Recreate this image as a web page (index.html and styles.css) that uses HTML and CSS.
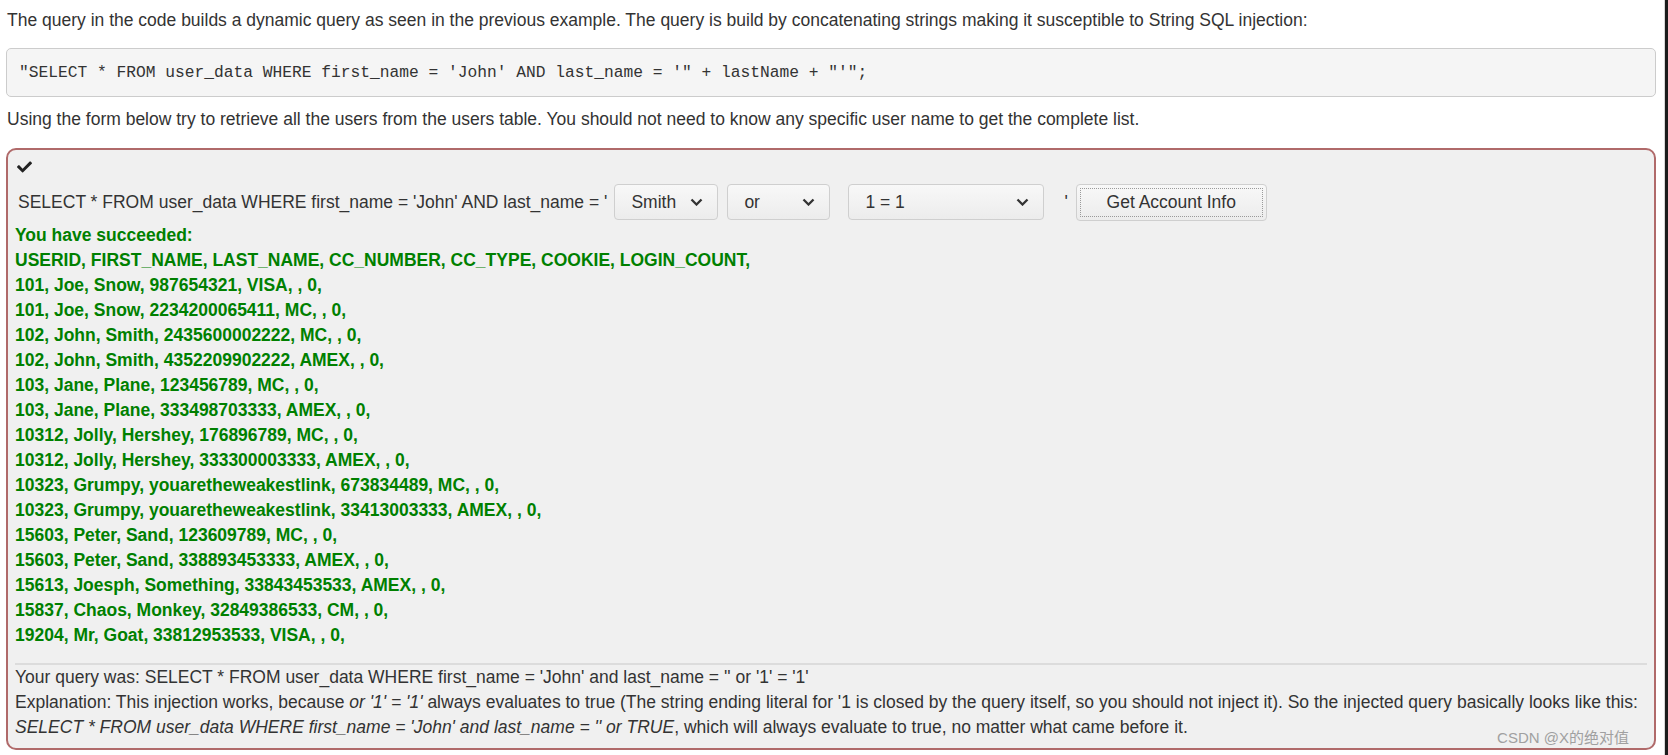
FILE: index.html
```html
<!DOCTYPE html>
<html lang="en">
<head>
<meta charset="utf-8">
<title>SQL Injection</title>
<link rel="stylesheet" href="styles.css">
</head>
<body>
<div class="page">
  <main class="content">
    <p class="lead">The query in the code builds a dynamic query as seen in the previous example. The query is build by concatenating strings making it susceptible to String SQL injection:</p>
    <pre class="code">"SELECT * FROM user_data WHERE first_name = 'John' AND last_name = '" + lastName + "'";</pre>
    <p class="lead">Using the form below try to retrieve all the users from the users table. You should not need to know any specific user name to get the complete list.</p>

    <section class="attack">
      <div class="check">
        <svg width="15" height="13" viewBox="0 0 512 420" aria-hidden="true"><path fill="#222" d="M173.9 409.4l-166.4-166.4c-10-10-10-26.2 0-36.2l36.2-36.2c10-10 26.2-10 36.2 0L192 282.7 432.1 42.6c10-10 26.2-10 36.2 0l36.2 36.2c10 10 10 26.2 0 36.2l-294.4 294.4c-10 10-26.2 10-36.2 0z"/></svg>
      </div>
      <form class="query-row">
        <span class="q-text">SELECT * FROM user_data WHERE first_name = 'John' AND last_name = '</span>
        <div class="select sel-name"><span>Smith</span><svg width="13" height="8" viewBox="0 0 13 8"><path d="M1.5 1.5l5 5 5-5" fill="none" stroke="#333" stroke-width="2.3"/></svg></div>
        <div class="select sel-op"><span>or</span><svg width="13" height="8" viewBox="0 0 13 8"><path d="M1.5 1.5l5 5 5-5" fill="none" stroke="#333" stroke-width="2.3"/></svg></div>
        <div class="select sel-cond"><span>1 = 1</span><svg width="13" height="8" viewBox="0 0 13 8"><path d="M1.5 1.5l5 5 5-5" fill="none" stroke="#333" stroke-width="2.3"/></svg></div>
        <span class="q-quote">'</span>
        <button type="button" class="btn"><span class="btn-inner">Get Account Info</span></button>
      </form>
      <div class="success">
        You have succeeded:<br>
        USERID, FIRST_NAME, LAST_NAME, CC_NUMBER, CC_TYPE, COOKIE, LOGIN_COUNT, <br>
        101, Joe, Snow, 987654321, VISA, , 0, <br>
        101, Joe, Snow, 2234200065411, MC, , 0, <br>
        102, John, Smith, 2435600002222, MC, , 0, <br>
        102, John, Smith, 4352209902222, AMEX, , 0, <br>
        103, Jane, Plane, 123456789, MC, , 0, <br>
        103, Jane, Plane, 333498703333, AMEX, , 0, <br>
        10312, Jolly, Hershey, 176896789, MC, , 0, <br>
        10312, Jolly, Hershey, 333300003333, AMEX, , 0, <br>
        10323, Grumpy, youaretheweakestlink, 673834489, MC, , 0, <br>
        10323, Grumpy, youaretheweakestlink, 33413003333, AMEX, , 0, <br>
        15603, Peter, Sand, 123609789, MC, , 0, <br>
        15603, Peter, Sand, 338893453333, AMEX, , 0, <br>
        15613, Joesph, Something, 33843453533, AMEX, , 0, <br>
        15837, Chaos, Monkey, 32849386533, CM, , 0, <br>
        19204, Mr, Goat, 33812953533, VISA, , 0, 
      </div>
      <hr class="sep">
      <div class="output">
        <p>Your query was: SELECT * FROM user_data WHERE first_name = 'John' and last_name = '' or '1' = '1'</p>
        <p>Explanation: This injection works, because <i>or '1' = '1'</i> always evaluates to true (The string ending literal for '1 is closed by the query itself, so you should not inject it). So the injected query basically looks like this: <i>SELECT * FROM user_data WHERE first_name = 'John' and last_name = '' or TRUE</i>, which will always evaluate to true, no matter what came before it.</p>
      </div>
      <div class="watermark">CSDN @X的绝对值</div>
    </section>
  </main>
  <div class="edge"></div>
</div>
</body>
</html>
```

FILE: styles.css
```css
* { box-sizing: border-box; }

html, body {
  margin: 0;
  padding: 0;
  background: #ffffff;
}

body {
  font-family: "Liberation Sans", Arial, sans-serif;
  font-size: 17.5px;
  line-height: 25px;
  color: #333333;
  overflow: hidden;
}

.page {
  display: flex;
  width: 1668px;
  height: 755px;
}

.content {
  flex: 1;
  padding: 8px 8px 0 6px;
}

.edge {
  width: 4px;
  border-left: 1px solid #d8d8d8;
  background: #1c1c1c;
}

.lead {
  margin: 0;
  padding-left: 1px;
}

.lead:first-child {
  margin-bottom: 15px;
}

.code {
  margin: 0 0 10px 0;
  padding: 11.9px 11.9px;
  font-family: "Liberation Mono", "DejaVu Sans Mono", monospace;
  font-size: 16.25px;
  line-height: 23.2px;
  color: #333333;
  background: #f5f5f5;
  border: 1px solid #cccccc;
  border-radius: 5px;
}

.attack {
  position: relative;
  margin-top: 16px;
  padding: 4px 7px 10px 7px;
  background: #f0f0f0;
  border: 2px solid #b06a6a;
  border-radius: 10px;
  height: 602px;
}

.check {
  height: 25px;
  display: flex;
  align-items: center;
  padding-left: 2px;
}

.query-row {
  display: flex;
  align-items: center;
  height: 39px;
  margin: 4px 0 0 0;
  padding-left: 3px;
}

.q-text {
  margin-right: 7px;
}

.select {
  display: flex;
  align-items: center;
  justify-content: space-between;
  height: 36px;
  padding: 0 14px 0 16px;
  margin-right: 9px;
  border: 1px solid #cfcfcf;
  border-radius: 4px;
  background: linear-gradient(#f8f8f8, #ececec);
  color: #333333;
}

.sel-name { width: 104px; }
.sel-op { width: 103px; margin-right: 18px; }
.sel-cond { width: 196px; }

.q-quote {
  margin: 0 8px 0 11px;
}

.btn {
  display: flex;
  align-items: stretch;
  width: 191px;
  height: 37px;
  padding: 3px;
  border: 1px solid #cfcfcf;
  border-radius: 4px;
  background: linear-gradient(#f8f8f8, #ececec);
  font-family: "Liberation Sans", Arial, sans-serif;
  font-size: 17.5px;
  color: #333333;
}

.btn-inner {
  flex: 1;
  display: flex;
  align-items: center;
  justify-content: center;
  border: 1px dotted #9a9a9a;
}

.success {
  margin-top: 1px;
  color: #008000;
  font-weight: bold;
}

.sep {
  margin: 15px 0 0 0;
  border: 0;
  border-top: 2px solid #dcdcdc;
  height: 0;
}

.output p {
  margin: 0;
}

.watermark {
  position: absolute;
  right: 25px;
  bottom: 0;
  line-height: 20px;
  font-family: "Liberation Sans", "Noto Sans CJK SC", sans-serif;
  font-size: 15px;
  color: #a0a0a0;
}
```
